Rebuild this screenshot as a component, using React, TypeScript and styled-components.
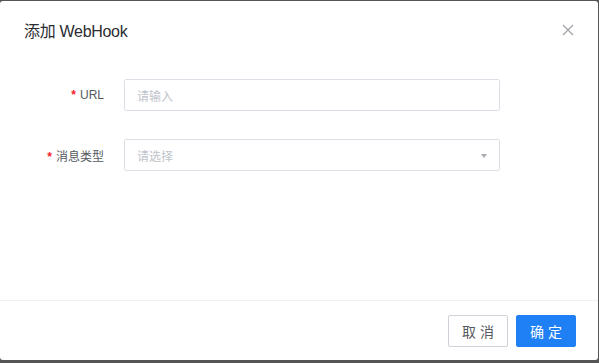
import React from 'react'
import styled, { createGlobalStyle } from 'styled-components'

const GlobalStyle = createGlobalStyle`
  html, body {
    margin: 0;
    padding: 0;
    background: #555555;
    font-family: "Liberation Sans", Arial, "Noto Sans CJK SC", sans-serif;
  }
`

const Dialog = styled.div`
  box-sizing: border-box;
  width: 598px;
  height: 359px;
  margin-top: 1px;
  background: #ffffff;
  border-radius: 3px;
  display: flex;
  flex-direction: column;
`

const Header = styled.div`
  height: 58px;
  padding: 0 24px;
  display: flex;
  align-items: center;
  justify-content: space-between;
`

const Title = styled.div`
  font-size: 16px;
  color: #2b2d31;
  font-weight: 400;
  letter-spacing: -0.3px;
`

const CloseButton = styled.button`
  border: none;
  background: none;
  padding: 0;
  margin-right: -2px;
  width: 16px;
  height: 16px;
  display: flex;
  align-items: center;
  justify-content: center;
  cursor: pointer;
`

const Body = styled.div`
  flex: 1;
  padding: 20px 24px 0;
  display: flex;
  flex-direction: column;
  gap: 28px;
`

const Row = styled.div`
  display: flex;
  align-items: center;
  gap: 20px;
`

const Label = styled.label`
  width: 80px;
  text-align: right;
  font-size: 12px;
  color: #555a61;
`

const Required = styled.span`
  color: #f5222d;
  font-weight: 700;
  margin-right: 4px;
`

const Field = styled.div`
  position: relative;
  box-sizing: border-box;
  width: 376px;
  height: 32px;
  border: 1px solid #dcdfe6;
  border-radius: 2px;
  padding: 0 12px;
  display: flex;
  align-items: center;
  font-size: 12px;
  color: #c0c4cc;
`

const Arrow = styled.span`
  position: absolute;
  right: 12px;
  top: 14px;
  width: 0;
  height: 0;
  border-left: 3.5px solid transparent;
  border-right: 3.5px solid transparent;
  border-top: 4px solid #a8abb2;
`

const Footer = styled.div`
  height: 60px;
  box-sizing: border-box;
  border-top: 1px solid #f0f0f0;
  padding: 0 22px 0 0;
  display: flex;
  align-items: center;
  justify-content: flex-end;
  gap: 8px;
`

const Button = styled.button<{ $primary?: boolean }>`
  box-sizing: border-box;
  width: 60px;
  height: 32px;
  border-radius: 2px;
  font-family: inherit;
  font-size: 14px;
  letter-spacing: 4px;
  padding: 0 0 0 4px;
  border: 1px solid ${({ $primary }) => ($primary ? '#1f80f5' : '#cfd2d8')};
  background: ${({ $primary }) => ($primary ? '#1f80f5' : '#ffffff')};
  color: ${({ $primary }) => ($primary ? '#ffffff' : '#555a61')};
  cursor: pointer;
`

export default function App(): JSX.Element {
  return (
    <>
      <GlobalStyle />
      <Dialog>
        <Header>
          <Title>添加 WebHook</Title>
          <CloseButton aria-label="close">
            <svg width="12" height="12" viewBox="0 0 12 12">
              <path d="M1 1L11 11M11 1L1 11" stroke="#a0a3a8" strokeWidth="1.3" />
            </svg>
          </CloseButton>
        </Header>
        <Body>
          <Row>
            <Label>
              <Required>*</Required>URL
            </Label>
            <Field>请输入</Field>
          </Row>
          <Row>
            <Label>
              <Required>*</Required>消息类型
            </Label>
            <Field>
              请选择
              <Arrow />
            </Field>
          </Row>
        </Body>
        <Footer>
          <Button>取消</Button>
          <Button $primary>确定</Button>
        </Footer>
      </Dialog>
    </>
  )
}
